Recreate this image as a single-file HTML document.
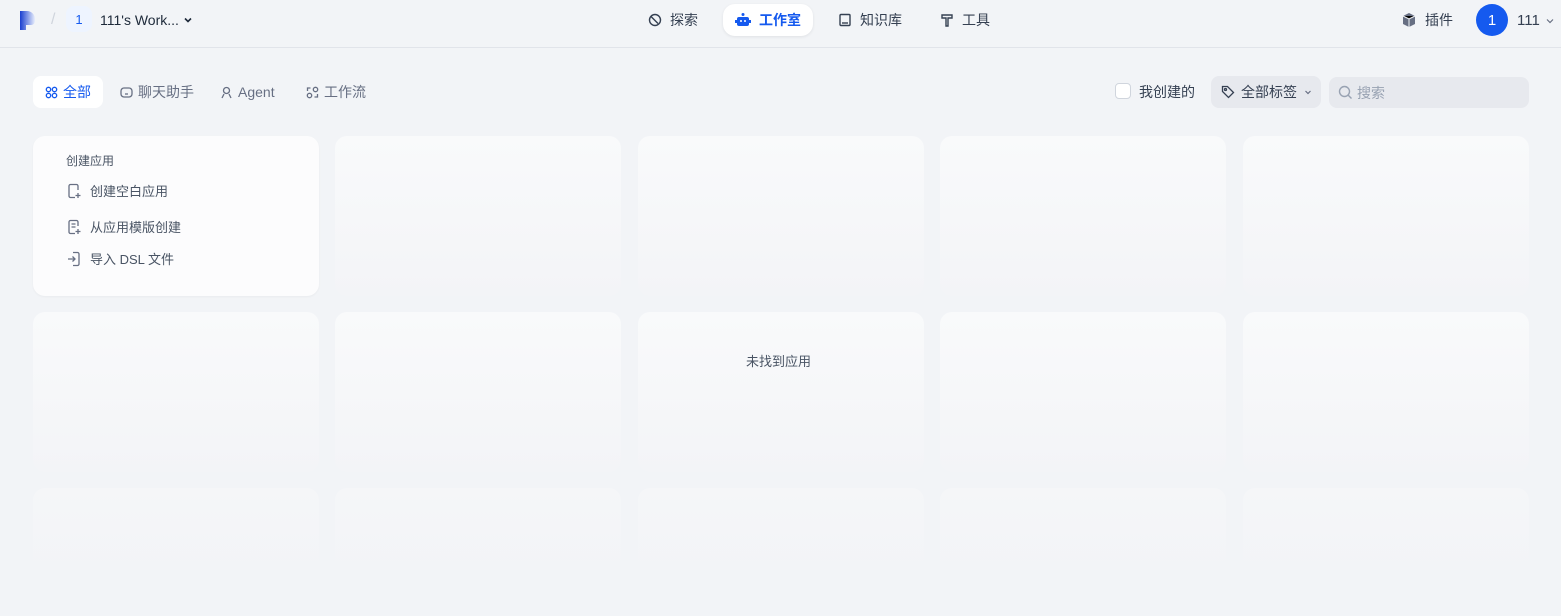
<!DOCTYPE html>
<html><head><meta charset="utf-8"><style>
*{box-sizing:border-box;margin:0;padding:0}
html,body{width:1561px;height:616px;overflow:hidden}
body{background:#f2f4f7;font-family:"Liberation Sans","Noto Sans CJK SC",sans-serif;color:#354052;position:relative}
.hdr{position:absolute;left:0;top:0;width:1561px;height:48px;border-bottom:1px solid #e1e4ea}
.abs{position:absolute;display:flex;align-items:center;line-height:1}
.nav{font-size:14px;color:#354052;height:32px;border-radius:12px;padding:0 12px;gap:8px}
.nav.act{background:#fff;color:#155aef;font-weight:600;box-shadow:0 1px 3px rgba(0,0,0,.08)}
.tab{font-size:14px;color:#676f83;height:32px;border-radius:8px;padding:0 12px;gap:5px}
.tab.act{background:#fff;color:#155aef}
.card{position:absolute;width:286px;height:160px;border-radius:12px;background:linear-gradient(#f9fafb,#f3f4f7)}
.card.f{background:linear-gradient(#f5f6f8,#f2f4f7);height:90px}
.item{position:absolute;left:66px;display:flex;align-items:center;gap:8px;font-size:13px;color:#495464;line-height:1}
</style></head><body>
<div class="hdr"></div>
<svg class="abs" style="left:19px;top:10px" width="20" height="20" viewBox="0 0 20 20"><defs><linearGradient id="g" x1="0" x2="1"><stop offset="0" stop-color="#1a3fd0"/><stop offset="1" stop-color="#e8eefc"/></linearGradient></defs><path d="M1 1h7a8 8 0 0 1 8 8v2a4 4 0 0 1-4 4H7v5H1z" fill="url(#g)"/></svg>
<div class="abs" style="left:51px;top:12px;color:#d0d5dd;font-size:16px">/</div>
<div class="abs" style="left:66px;top:6px;width:26px;height:26px;border-radius:8px;background:#eef4ff;justify-content:center;font-size:13px;color:#155aef">1</div>
<div class="abs" style="left:100px;top:13px;font-size:14px;color:#1d2939;gap:4px">111's Work... <svg width="10" height="10" viewBox="0 0 10 10"><path d="M2 3.5l3 3 3-3" stroke="#1d2939" stroke-width="1.6" fill="none"/></svg></div>

<div class="abs nav" style="left:636px;top:4px"><svg width="14" height="14" viewBox="0 0 14 14"><circle cx="7" cy="7" r="5.5" stroke="#354052" stroke-width="1.4" fill="none"/><path d="M3 3.5l7 7" stroke="#354052" stroke-width="1.4"/></svg>探索</div>
<div class="abs nav act" style="left:723px;top:4px;padding:0 12px"><svg width="16" height="14" viewBox="0 0 16 14"><rect x="2" y="4" width="12" height="9" rx="2" fill="#155aef"/><rect x="0" y="7" width="2" height="3" fill="#155aef"/><rect x="14" y="7" width="2" height="3" fill="#155aef"/><circle cx="8" cy="1.5" r="1.5" fill="#155aef"/><circle cx="6" cy="8" r="1" fill="#fff"/><circle cx="10" cy="8" r="1" fill="#fff"/></svg>工作室</div>
<div class="abs nav" style="left:826px;top:4px"><svg width="14" height="14" viewBox="0 0 14 14"><rect x="2" y="1.5" width="10" height="11" rx="1" stroke="#354052" stroke-width="1.4" fill="none"/><path d="M4 10h6" stroke="#354052" stroke-width="1.4"/></svg>知识库</div>
<div class="abs nav" style="left:928px;top:4px"><svg width="14" height="14" viewBox="0 0 14 14"><path d="M2 2h10v3H8v8H6V5H2z" stroke="#354052" stroke-width="1.4" fill="none"/></svg>工具</div>

<div class="abs" style="left:1401px;top:12px;font-size:14px;color:#354052;gap:8px"><svg width="16" height="16" viewBox="0 0 16 16"><path d="M8 1l6 3v8l-6 3-6-3V4z" fill="#676f83"/><path d="M2 4l6 3 6-3M8 7v8" stroke="#f2f4f7" stroke-width="1"/></svg>插件</div>
<div class="abs" style="left:1476px;top:4px;width:32px;height:32px;border-radius:50%;background:#155aef;color:#fff;justify-content:center;font-size:15px">1</div>
<div class="abs" style="left:1517px;top:13px;font-size:15px;color:#354052;gap:6px">111 <svg width="8" height="8" viewBox="0 0 8 8"><path d="M1 2.5l3 3 3-3" stroke="#676f83" stroke-width="1.2" fill="none"/></svg></div>

<div class="abs tab act" style="left:33px;top:76px"><svg width="13" height="13" viewBox="0 0 13 13" fill="none" stroke="#155aef" stroke-width="1.3"><circle cx="3.5" cy="3.5" r="2.2"/><circle cx="9.5" cy="3.5" r="2.2"/><circle cx="3.5" cy="9.5" r="2.2"/><circle cx="9.5" cy="9.5" r="2.2"/></svg>全部</div>
<div class="abs tab" style="left:108px;top:76px"><svg width="13" height="13" viewBox="0 0 13 13" fill="none" stroke="#676f83" stroke-width="1.3"><rect x="1" y="2" width="11" height="9" rx="3"/><path d="M5 8h3"/></svg>聊天助手</div>
<div class="abs tab" style="left:208px;top:76px"><svg width="13" height="13" viewBox="0 0 13 13" fill="none" stroke="#676f83" stroke-width="1.3"><circle cx="6.5" cy="4.5" r="3"/><path d="M2 12l2-4M11 12l-2-4"/></svg>Agent</div>
<div class="abs tab" style="left:294px;top:76px"><svg width="13" height="13" viewBox="0 0 13 13" fill="none" stroke="#676f83" stroke-width="1.3"><circle cx="3.5" cy="9.5" r="2.2"/><circle cx="9.5" cy="3.5" r="2.2"/><path d="M1.5 5V2h3M11.5 8v3h-3"/></svg>工作流</div>

<div class="abs" style="left:1115px;top:83px;width:16px;height:16px;border:1px solid #d0d5dd;border-radius:4px;background:#fff"></div>
<div class="abs" style="left:1139px;top:85px;font-size:14px;color:#354052">我创建的</div>
<div class="abs" style="left:1211px;top:76px;width:110px;height:32px;border-radius:8px;background:#e7e9ee;padding-left:10px;gap:6px;font-size:14px;color:#354052"><svg width="14" height="14" viewBox="0 0 14 14" fill="none" stroke="#354052" stroke-width="1.3"><path d="M1.5 1.5h5l6 6-5 5-6-6z"/><circle cx="4.5" cy="4.5" r="1"/></svg>全部标签<svg width="10" height="10" viewBox="0 0 10 10"><path d="M2.5 4l2.5 2.5L7.5 4" stroke="#676f83" stroke-width="1.2" fill="none"/></svg></div>
<div class="abs" style="left:1329px;top:77px;width:200px;height:31px;border-radius:8px;background:#e7e9ee;padding-left:9px;gap:4px;font-size:14px;color:#98a2b2"><svg width="15" height="15" viewBox="0 0 15 15" fill="none" stroke="#98a2b2" stroke-width="1.4"><circle cx="6.5" cy="6.5" r="5"/><path d="M10 10l3.5 3.5"/></svg>搜索</div>

<div class="card" style="left:33px;top:136px;background:#fcfcfd;box-shadow:0 1px 2px rgba(0,0,0,.04)"></div>
<div class="abs" style="left:66px;top:155px;font-size:12px;color:#495464">创建应用</div>
<div class="item" style="top:183px"><svg width="16" height="16" viewBox="0 0 16 16" fill="none" stroke="#676f83" stroke-width="1.3"><path d="M12 7V3a1.5 1.5 0 0 0-1.5-1.5h-6A1.5 1.5 0 0 0 3 3v10a1.5 1.5 0 0 0 1.5 1.5H9"/><path d="M12 10v5M9.5 12.5h5"/></svg>创建空白应用</div>
<div class="item" style="top:219px"><svg width="16" height="16" viewBox="0 0 16 16" fill="none" stroke="#676f83" stroke-width="1.3"><path d="M12 7V3a1.5 1.5 0 0 0-1.5-1.5h-6A1.5 1.5 0 0 0 3 3v10a1.5 1.5 0 0 0 1.5 1.5H9M5.5 5h4M5.5 8h4"/><path d="M12 10v5M9.5 12.5h5"/></svg>从应用模版创建</div>
<div class="item" style="top:251px"><svg width="16" height="16" viewBox="0 0 16 16" fill="none" stroke="#676f83" stroke-width="1.3"><path d="M7 1.5h4.5A1.5 1.5 0 0 1 13 3v10a1.5 1.5 0 0 1-1.5 1.5H7M2 8h7M6.5 5.5L9 8l-2.5 2.5"/></svg>导入 DSL 文件</div>

<div class="card" style="left:335px;top:136px"></div>
<div class="card" style="left:638px;top:136px"></div>
<div class="card" style="left:940px;top:136px"></div>
<div class="card" style="left:1243px;top:136px"></div>
<div class="card" style="left:33px;top:312px"></div>
<div class="card" style="left:335px;top:312px"></div>
<div class="card" style="left:638px;top:312px"></div>
<div class="card" style="left:940px;top:312px"></div>
<div class="card" style="left:1243px;top:312px"></div>
<div class="card f" style="left:33px;top:488px"></div>
<div class="card f" style="left:335px;top:488px"></div>
<div class="card f" style="left:638px;top:488px"></div>
<div class="card f" style="left:940px;top:488px"></div>
<div class="card f" style="left:1243px;top:488px"></div>
<div class="abs" style="left:746px;top:355px;font-size:13px;color:#495464">未找到应用</div>
</body></html>
